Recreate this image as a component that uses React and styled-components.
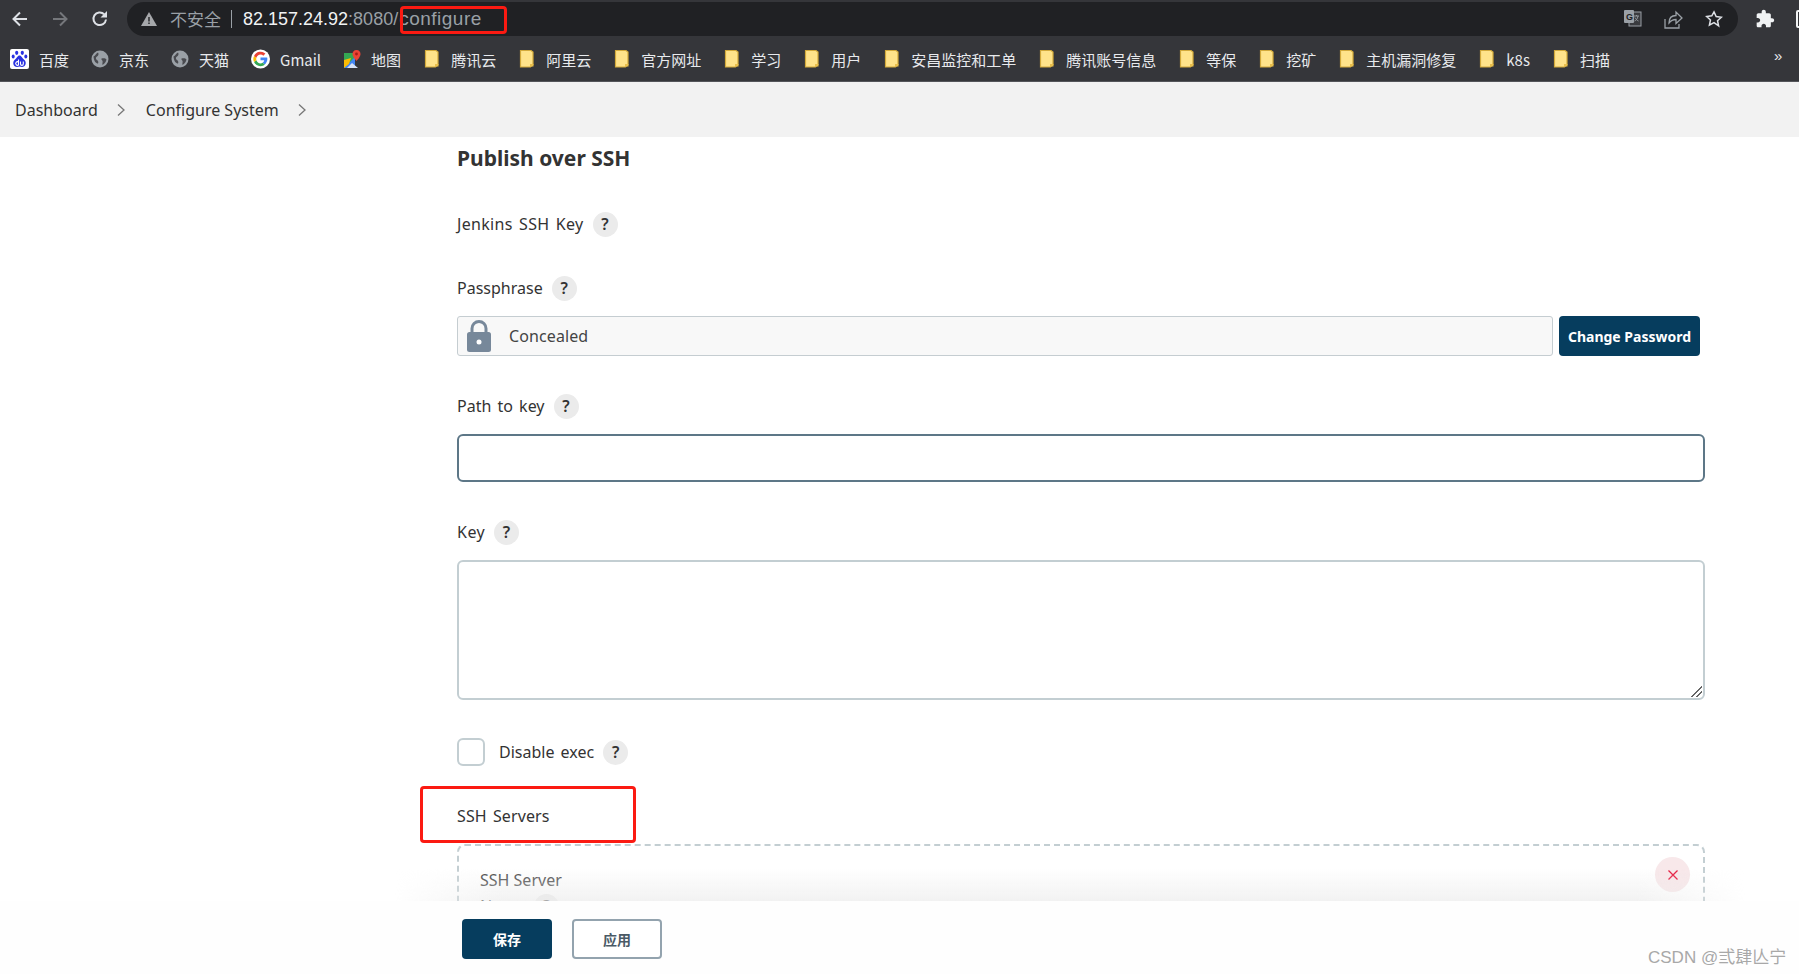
import React from "react";
import styled, { createGlobalStyle } from "styled-components";

const Global = createGlobalStyle`
  html, body { margin: 0; padding: 0; background: #fff; }
  body { font-family: "Noto Sans", "Noto Sans CJK SC", sans-serif; color: #333; overflow: hidden; }
  * { box-sizing: border-box; }
`;

const Page = styled.div`
  position: relative; width: 1799px; height: 974px; display: flex; flex-direction: column; overflow: hidden;
`;
const Toolbar = styled.div`
  height: 36px; background: #35363a; display: flex; align-items: flex-start; padding: 2px 0 0 11px; flex: none;
`;
const NavIcons = styled.div`
  display: flex; align-items: center; gap: 22px; width: 116px; height: 34px; flex: none;
`;
const Omnibox = styled.div`
  width: 1611px; height: 34px; background: #202124; border-radius: 17px;
  display: flex; align-items: center; padding: 0 0 0 43px; flex: none; position: relative;
  font-family: "Liberation Sans", "Noto Sans CJK SC", sans-serif; font-size: 18px; white-space: nowrap;
`;
const Warn = styled.svg`position: absolute; left: 14px; top: 10px;`;
const Insecure = styled.span`color: #9aa0a6; font-size: 17px; margin-bottom: 2px;`;
const Divider = styled.span`width: 1px; height: 18px; background: #9aa0a6; margin: 0 11px 0 10px;`;
const Host = styled.span`color: #f1f3f4;`;
const Path = styled.span`color: #9aa0a6;`;
const PathTail = styled(Path)`font-size: 19px; letter-spacing: .5px; margin-left: 1px;`;
const OmniIcons = styled.div`
  margin-left: auto; display: flex; align-items: center; gap: 22px; padding-right: 15px;
`;
const ExtIcons = styled.div`
  display: flex; align-items: center; gap: 21px; padding: 7px 0 0 17px; flex: none;
`;
const Bookmarks = styled.div`
  height: 46px; background: #35363a; border-bottom: 1px solid #54555a; display: flex; align-items: center; padding: 1px 0 0 10px; gap: 22px; flex: none; position: relative;
  font-family: "Noto Sans CJK SC", "Noto Sans", sans-serif; font-size: 15px; color: #e8eaed;
`;
const Bookmark = styled.div`
  display: flex; align-items: center; gap: 10px; white-space: nowrap;
`;
const More = styled.span`
  position: absolute; left: 1774px; top: 11px; color: #e8eaed; font-size: 15px; font-family: "Liberation Sans", sans-serif;
`;
const Crumbs = styled.nav`
  height: 55px; background: #f2f2f2; display: flex; align-items: center; padding-left: 15px; font-size: 16px; color: #333; flex: none;
`;
const Crumb = styled.span`margin-right: 18px;`;
const Chevron = styled.svg`margin-right: 20px;`;

const Main = styled.main`
  flex: 1; min-height: 0; overflow: hidden; position: relative; padding: 7px 94px 0 457px;
`;
const Title = styled.h2`
  margin: 0; font-size: 21px; font-weight: 700; line-height: 28px; color: #333; height: 67px;
`;
const Field = styled.div`display: flex; flex-direction: column; margin-bottom: ${p => p.$mb}px;`;
const LabelRow = styled.div`
  display: flex; align-items: center; gap: 9px; height: 26px; font-size: 16px; word-spacing: 2px; letter-spacing: ${p => p.$ls || 0}px; color: #333; margin-bottom: ${p => p.$mb || 0}px;
`;
const Help = styled.span`
  width: 25px; height: 25px; border-radius: 50%; background: #ebebeb; color: #333; display: inline-flex; align-items: center; justify-content: center;
  font-size: 16px; font-weight: 600;
`;
const SecretRow = styled.div`display: flex; gap: 6px; padding-right: 5px;`;
const Hidden = styled.div`
  flex: 1; height: 40px; background: #f8f8f8; border: 1px solid #c5cdd1; border-radius: 3px; display: flex; align-items: center; padding-left: 9px; gap: 18px;
  font-size: 16px; letter-spacing: .1px; color: #444;
`;
const ChangeBtn = styled.button`
  width: 141px; height: 40px; background: #063d5e; color: #fff; border: 0; border-radius: 4px; font: 700 14px "Noto Sans", sans-serif; padding: 0;
`;
const TextInput = styled.input`
  display: block; width: 100%; height: 48px; border: 2px solid #5d7787; border-radius: 6px; background: #fff; outline: 0;
`;
const TextArea = styled.textarea`
  display: block; width: 100%; height: 140px; border: 2px solid #c3ced2; border-radius: 6px; background: #fff; outline: 0; resize: vertical;
  &::-webkit-resizer {
    background: linear-gradient(135deg, transparent 48%, #666 48%, #666 58%, transparent 58%, transparent 70%, #666 70%, #666 80%, transparent 80%) right 1px bottom 1px / 11px 11px no-repeat;
  }
`;
const CheckRow = styled(LabelRow)`height: 28px; margin-bottom: 37px;`;
const Check = styled.span`
  width: 28px; height: 28px; border: 2px solid #c3ced2; border-radius: 6px; margin-right: 5px; background: #fff;
`;
const SectionLabel = styled.div`font-size: 16px; word-spacing: 2px; letter-spacing: .1px; line-height: 26px; color: #333; margin-bottom: 15px;`;
const Repeat = styled.div`
  position: relative; border: 2px dashed #c3ced2; border-radius: 8px; height: 200px; padding: 21px 0 0 21px;
`;
const RepeatTitle = styled.div`font-size: 16px; line-height: 26px; color: #444;`;
const Remove = styled.span`
  position: absolute; right: 13px; top: 11px; width: 35px; height: 35px; border-radius: 50%; background: #f8e8ea; display: flex; align-items: center; justify-content: center;
`;
const NameRow = styled(LabelRow)`margin-top: 1px; height: 24px;`;
const Shade = styled.div`
  position: absolute; left: 395px; width: 1350px; bottom: 0; height: 34px;
  background: linear-gradient(to bottom, rgba(235,235,235,0), rgba(235,235,235,.65));
  -webkit-mask-image: linear-gradient(to right, transparent, #000 8%, #000 92%, transparent);
  mask-image: linear-gradient(to right, transparent, #000 8%, #000 92%, transparent);
`;
const Footer = styled.footer`
  height: 73px; flex: none; background: #fefefe; display: flex; gap: 20px; padding: 18px 0 0 462px;
`;
const Save = styled.button`
  width: 90px; height: 40px; background: #063d5e; color: #fff; border: 0; border-radius: 4px;
  font: 700 14px "Noto Sans CJK SC", sans-serif;
`;
const Apply = styled.button`
  width: 90px; height: 40px; background: #fff; color: #4a5a66; border: 2px solid #93a3ae; border-radius: 4px;
  font: 700 14px "Noto Sans CJK SC", sans-serif;
`;
const Note = styled.div`
  position: absolute; border: 3px solid #fb1a12; border-radius: 4px; pointer-events: none;
  left: ${p => p.$l}px; top: ${p => p.$t}px; width: ${p => p.$w}px; height: ${p => p.$h}px;
`;
const Watermark = styled.div`
  position: absolute; left: 1648px; top: 943px; font: 17px "Liberation Sans", "Noto Sans CJK SC", sans-serif; color: #a8a8a8; white-space: nowrap;
`;

const Folder = () => (
  <svg width="18" height="20" viewBox="0 0 18 20">
    <path d="M2.5 1.5H13L15 3V15.5L12.5 18H2.5Z" fill="#ffe38a" stroke="#d3aa3a" strokeWidth="1.2" />
    <path d="M12 18V15H15.5V17.5H12Z" fill="#e9bf4c" />
  </svg>
);
const Globe = () => (
  <svg width="18" height="18" viewBox="0 0 18 18">
    <circle cx="9" cy="9" r="8.500" fill="#9aa0a6" />
    <path d="M2.500 6.500C5 5 5 3.500 7 2.500c1 1.500.5 3-1 4s-1.500 2.500 0 3.500 1.500 2.500 1 3.500c-2 0-4-2-4.500-7ZM10.500 8.500c2-.5 4-.5 5 1-.5 2.500-2 4.500-4 5.500-.5-2 .5-3 0-4s-1.500-1.500-1-2.500Z" fill="#4a4b50" />
  </svg>
);
const Baidu = () => (
  <svg width="19" height="20" viewBox="0 0 19 20">
    <rect width="19" height="20" rx="2" fill="#fff" />
    <ellipse cx="6.700" cy="3.800" rx="1.600" ry="2.100" fill="#2932e1" />
    <ellipse cx="12.300" cy="3.800" rx="1.600" ry="2.100" fill="#2932e1" />
    <ellipse cx="3.200" cy="7.500" rx="1.500" ry="2" fill="#2932e1" />
    <ellipse cx="15.800" cy="7.500" rx="1.500" ry="2" fill="#2932e1" />
    <path d="M9.500 6.500C7.500 6.500 7 9 4.500 11c-2.500 2.500-1 7 2.500 7 1 0 1.700-.5 2.500-.5s1.500.5 2.500.5c3.500 0 5-4.500 2.500-7C12 9 11.500 6.500 9.500 6.500Z" fill="#2932e1" />
    <path d="M8.500 10.500v6M8.500 13a1.800 1.800 0 1 0 0 3M10.500 12.500v2.500c0 1.800 2.800 1.800 2.800 0v-2.500" fill="none" stroke="#fff" strokeWidth="1.100" />
  </svg>
);
const Google = () => (
  <svg width="19" height="20" viewBox="0 0 20 20">
    <circle cx="10" cy="10" r="10" fill="#fff" />
    <path d="M17 8.500H10v2.900h4a4.300 4.300 0 0 1-1.800 2.600l2.300 1.800C16 14.400 17.200 12.400 17.200 10c0-.5 0-1-.2-1.500Z" fill="#4285f4" />
    <path d="M5.700 11.300 3.200 13.200A7.500 7.500 0 0 0 10 17.500c2 0 3.500-.6 4.500-1.700L12.200 14c-.6.400-1.300.7-2.200.7-2 0-3.700-1.400-4.300-3.400Z" fill="#34a853" />
    <path d="M5.700 8.700 3.200 6.800a7.500 7.500 0 0 0 0 6.400l2.500-1.900a4.600 4.600 0 0 1 0-2.600Z" fill="#fbbc05" />
    <path d="M10 5.300c1.200 0 2.200.4 3 1.200l2.200-2.200A7.500 7.500 0 0 0 3.200 6.800l2.500 1.900C6.300 6.700 8 5.300 10 5.300Z" fill="#ea4335" />
  </svg>
);
const Maps = () => (
  <svg width="18" height="19" viewBox="0 0 18 19">
    <path d="M1 3h11v15H1Z" fill="#34a853" />
    <path d="M1 18 12 7v11Z" fill="#4285f4" />
    <path d="M1 10 8 8l-2 6-5 4Z" fill="#fbbc05" />
    <path d="M4 18l5-5 6 5Z" fill="#d7e3f7" />
    <path d="M13.500 0C11 0 9.500 2 9.500 4c0 3 4 7 4 7s4-4 4-7c0-2-1.500-4-4-4Z" fill="#ea4335" />
    <circle cx="13.500" cy="4" r="1.400" fill="#a51d14" />
  </svg>
);

const bookmarks = [
  [<Baidu />, "百度"], [<Globe />, "京东"], [<Globe />, "天猫"], [<Google />, "Gmail"], [<Maps />, "地图"],
  ...["腾讯云", "阿里云", "官方网址", "学习", "用户", "安昌监控和工单", "腾讯账号信息", "等保", "挖矿", "主机漏洞修复", "k8s", "扫描"].map(t => [<Folder />, t]),
];

const Lock = () => (
  <svg width="24" height="32" viewBox="0 0 24 32">
    <path d="M5 14V8.500a7 7 0 0 1 14 0V14" fill="none" stroke="#77889a" strokeWidth="3" />
    <rect y="12" width="24" height="20" rx="2.500" fill="#77889a" />
    <circle cx="12" cy="22" r="2.500" fill="#fff" />
  </svg>
);
const ChevronIcon = () => (
  <Chevron width="10" height="14" viewBox="0 0 10 14">
    <path d="M2 1.500 8 7l-6 5.500" fill="none" stroke="#777" strokeWidth="1.300" />
  </Chevron>
);
const HelpMark = () => <Help>?</Help>;

export default function App() {
  return (
    <Page>
      <Global />
      <Toolbar>
        <NavIcons>
          <svg width="18" height="18" viewBox="0 0 18 18"><path d="M16 9H3M9 2.500 2.500 9 9 15.500" fill="none" stroke="#dee1e6" strokeWidth="2" /></svg>
          <svg width="18" height="18" viewBox="0 0 18 18"><path d="M2 9h13M9 2.500 15.500 9 9 15.500" fill="none" stroke="#75777b" strokeWidth="2" /></svg>
          <svg width="18" height="18" viewBox="0 0 18 18"><path d="M15 9.500A6.300 6.300 0 1 1 13.200 4.300" fill="none" stroke="#dee1e6" strokeWidth="2" /><path d="M16 1v6.500H9.500Z" fill="#dee1e6" /></svg>
        </NavIcons>
        <Omnibox>
          <Warn width="16" height="14" viewBox="0 0 16 14"><path d="M8 0 16 14H0Z" fill="#a6a8ab" /><path d="M7.300 5h1.400v4.500H7.300ZM7.300 10.500h1.400v1.500H7.300Z" fill="#202124" /></Warn>
          <Insecure>不安全</Insecure>
          <Divider />
          <Host>82.157.24.92</Host><Path>:8080/</Path><PathTail>configure</PathTail>
          <OmniIcons>
            <svg width="18" height="20" viewBox="0 0 18 20"><rect x="5" y="3" width="12" height="14" fill="#3a3b3f" stroke="#9aa0a6" /><rect x="0" y="1" width="10" height="13" rx="1" fill="#9aa0a6" /><text x="2" y="11" fontSize="9" fontWeight="700" fill="#202124" fontFamily="Liberation Sans">G</text><path d="M10 7h5M12.500 6v1M14 7c-.5 3-2 4.500-3.500 5M11 8.500c.7 1.500 2 3 3.500 3.500" stroke="#9aa0a6" fill="none" strokeWidth=".9" /></svg>
            <svg width="19" height="19" viewBox="0 0 19 19"><path d="M1 9v9h14v-4" fill="none" stroke="#9aa0a6" strokeWidth="1.300" /><path d="M5 13c0-5 3-7.500 7-7.500V2l6 6-6 5.500V9.500c-3 0-5 1-7 3.500Z" fill="none" stroke="#9aa0a6" strokeWidth="1.300" /></svg>
            <svg width="18" height="18" viewBox="0 0 24 24"><path d="M12 2.500l2.900 6.300 6.900.8-5.100 4.700 1.400 6.800L12 16.700l-6.100 3.400 1.400-6.800-5.100-4.700 6.900-.8Z" fill="none" stroke="#dee1e6" strokeWidth="2" /></svg>
          </OmniIcons>
        </Omnibox>
        <ExtIcons>
          <svg width="20" height="20" viewBox="0 0 24 24"><path fill="#f1f3f4" d="M20.500 11H19V7c0-1.100-.9-2-2-2h-4V3.500C13 2.120 11.880 1 10.500 1S8 2.120 8 3.500V5H4c-1.100 0-1.990.9-1.990 2v3.800H3.500c1.490 0 2.700 1.210 2.700 2.700s-1.210 2.700-2.700 2.700H2V20c0 1.100.9 2 2 2h3.800v-1.500c0-1.490 1.210-2.700 2.700-2.700 1.490 0 2.700 1.210 2.700 2.700V22H17c1.100 0 2-.9 2-2v-4h1.500c1.380 0 2.500-1.120 2.500-2.500S21.880 11 20.500 11z" /></svg>
          <svg width="16" height="18" viewBox="0 0 16 18"><rect x="1" y="1" width="14" height="16" rx="1" fill="none" stroke="#f1f3f4" strokeWidth="2" /></svg>
        </ExtIcons>
      </Toolbar>
      <Bookmarks>
        {bookmarks.map(([icon, text]) => (
          <Bookmark key={text}>{icon}<span>{text}</span></Bookmark>
        ))}
        <More>»</More>
      </Bookmarks>
      <Crumbs>
        <Crumb>Dashboard</Crumb><ChevronIcon />
        <Crumb>Configure System</Crumb><ChevronIcon />
      </Crumbs>
      <Main>
        <Title>Publish over SSH</Title>
        <Field $mb={38}><LabelRow $ls={0.3}>Jenkins SSH Key <HelpMark /></LabelRow></Field>
        <Field $mb={37}>
          <LabelRow $mb={15}>Passphrase <HelpMark /></LabelRow>
          <SecretRow>
            <Hidden><Lock />Concealed</Hidden>
            <ChangeBtn>Change Password</ChangeBtn>
          </SecretRow>
        </Field>
        <Field $mb={37}>
          <LabelRow $mb={15}>Path to key <HelpMark /></LabelRow>
          <TextInput />
        </Field>
        <Field $mb={38}>
          <LabelRow $mb={15} $ls={0.5}>Key <HelpMark /></LabelRow>
          <TextArea />
        </Field>
        <CheckRow><Check />Disable exec <HelpMark /></CheckRow>
        <SectionLabel>SSH Servers</SectionLabel>
        <Repeat>
          <RepeatTitle>SSH Server</RepeatTitle>
          <NameRow>Name <HelpMark /></NameRow>
          <Remove>
            <svg width="12" height="12" viewBox="0 0 12 12"><path d="M1.500 1.500l9 9M10.500 1.500l-9 9" stroke="#e6173c" strokeWidth="1.300" /></svg>
          </Remove>
        </Repeat>
        <Shade />
      </Main>
      <Footer>
        <Save>保存</Save>
        <Apply>应用</Apply>
      </Footer>
      <Note $l={400} $t={6} $w={107} $h={28} />
      <Note $l={420} $t={786} $w={216} $h={57} />
      <Watermark>CSDN @弎肆亾宁</Watermark>
    </Page>
  );
}
